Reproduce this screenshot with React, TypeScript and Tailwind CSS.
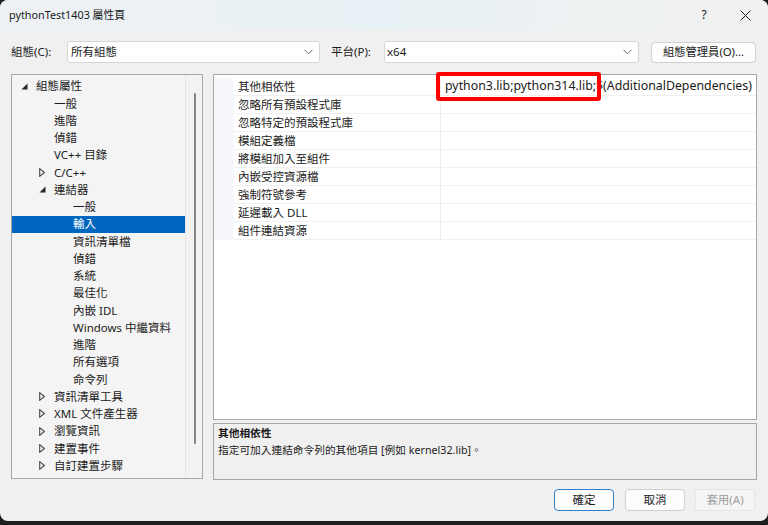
import React from "react";

type Node = { level: 0 | 1 | 2; label: string; state?: "open" | "closed"; selected?: boolean };

const tree: Node[] = [
  { level: 0, label: "組態屬性", state: "open" },
  { level: 1, label: "一般" },
  { level: 1, label: "進階" },
  { level: 1, label: "偵錯" },
  { level: 1, label: "VC++ 目錄" },
  { level: 1, label: "C/C++", state: "closed" },
  { level: 1, label: "連結器", state: "open" },
  { level: 2, label: "一般" },
  { level: 2, label: "輸入", selected: true },
  { level: 2, label: "資訊清單檔" },
  { level: 2, label: "偵錯" },
  { level: 2, label: "系統" },
  { level: 2, label: "最佳化" },
  { level: 2, label: "內嵌 IDL" },
  { level: 2, label: "Windows 中繼資料" },
  { level: 2, label: "進階" },
  { level: 2, label: "所有選項" },
  { level: 2, label: "命令列" },
  { level: 1, label: "資訊清單工具", state: "closed" },
  { level: 1, label: "XML 文件產生器", state: "closed" },
  { level: 1, label: "瀏覽資訊", state: "closed" },
  { level: 1, label: "建置事件", state: "closed" },
  { level: 1, label: "自訂建置步驟", state: "closed" },
];

const props = [
  "其他相依性",
  "忽略所有預設程式庫",
  "忽略特定的預設程式庫",
  "模組定義檔",
  "將模組加入至組件",
  "內嵌受控資源檔",
  "強制符號參考",
  "延遲載入 DLL",
  "組件連結資源",
];

function Chevron() {
  return (
    <svg width="9" height="6" viewBox="0 0 9 6" className="shrink-0">
      <polyline points="0.5,0.8 4.5,4.8 8.5,0.8" fill="none" stroke="#6b6b6b" strokeWidth="1" />
    </svg>
  );
}

function OpenTri({ selected }: { selected?: boolean }) {
  return (
    <svg width="7" height="7" viewBox="0 0 7 7">
      <polygon points="6.5,0.5 6.5,6.5 0.5,6.5" fill={selected ? "#fff" : "#262626"} />
    </svg>
  );
}

function ClosedTri() {
  return (
    <svg width="6" height="9" viewBox="0 0 6 9">
      <polygon points="0.7,0.7 5.3,4.5 0.7,8.3" fill="none" stroke="#4a4a4a" strokeWidth="1.1" />
    </svg>
  );
}

export default function App() {
  const padFor = (l: number) => (l === 0 ? "pl-[6px]" : l === 1 ? "pl-[24px]" : "pl-[43px]");
  return (
    <div className="w-[768px] h-[525px] bg-[#1e1e1e] overflow-hidden font-['Noto_Sans','Noto_Sans_CJK_TC',sans-serif] text-[#1b1b1b]">
      <div className="w-[768px] h-[521px] bg-[#f0f0f0] rounded-[8px] flex flex-col overflow-hidden">
        {/* Title bar */}
        <div className="h-[30px] flex items-center bg-linear-to-r from-[#eef1f4] via-[#e8f1f5] to-[#f1f1ef] shrink-0">
          <div className="pl-[9px] text-[10.8px] leading-none text-[#1a1a1a]">pythonTest1403 屬性頁</div>
          <div className="flex-1" />
          <div className="w-[20px] text-center text-[12px] leading-none text-[#1a1a1a] mr-[26px]">?</div>
          <svg width="11" height="11" viewBox="0 0 11 11" className="mr-[17px]">
            <path d="M0.5 0.5 L10.5 10.5 M10.5 0.5 L0.5 10.5" stroke="#1a1a1a" strokeWidth="1" />
          </svg>
        </div>

        {/* Top row */}
        <div className="mt-[11px] h-[22px] flex items-center pl-[11px] text-[11.5px] shrink-0">
          <div className="w-[56px]">組態(C):</div>
          <div className="w-[253px] h-[22px] bg-white border border-[#d6d6d6] rounded-[3px] flex items-center pl-[3px] pr-[6px]">
            <span className="flex-1">所有組態</span>
            <Chevron />
          </div>
          <div className="w-[53px] ml-[11px]">平台(P):</div>
          <div className="w-[255px] h-[22px] bg-white border border-[#d6d6d6] rounded-[3px] flex items-center pl-[2px] pr-[6px]">
            <span className="flex-1">x64</span>
            <Chevron />
          </div>
          <div className="ml-[12px] w-[105px] h-[21px] bg-[#fdfdfd] border border-[#d0d0d0] rounded-[4px] flex items-center justify-center text-[11.3px]">
            組態管理員(O)...
          </div>
        </div>

        {/* Main area */}
        <div className="mt-[11px] h-[406px] flex pl-[11px] shrink-0">
          {/* Tree */}
          <div className="w-[192px] h-[405px] border border-[#a7a7a7] bg-[#f4f4f4] flex">
            <div className="w-[173px] pt-[2.5px] text-[11.5px]">
              {tree.map((n, i) => (
                <div
                  key={i}
                  className={`h-[17.25px] flex items-center ${padFor(n.level)} ${n.selected ? "bg-[#0067c0] text-white" : ""}`}
                >
                  <div className="w-[18px] flex items-center pl-[3px]">
                    {n.state === "open" && <OpenTri selected={n.selected} />}
                    {n.state === "closed" && <ClosedTri />}
                  </div>
                  <span className="whitespace-nowrap leading-none">{n.label}</span>
                </div>
              ))}
            </div>
            <div className="flex-1 border-l border-[#e4e4e4] bg-[#f2f2f2] flex justify-center pt-[18px]">
              <div className="w-[2px] h-[351px] bg-[#858585] rounded-full ml-[1px]" />
            </div>
          </div>

          {/* Right column */}
          <div className="ml-[10px] w-[544px] flex flex-col">
            <div className="relative h-[346px] border border-[#a7a7a7] bg-white pt-[3px]">
              {props.map((p, i) => (
                <div key={i} className="h-[18px] flex">
                  <div className="w-[20px] bg-[#f6f8fb]" />
                  <div className="flex-1 flex border-b border-[#f0f0f0]">
                    <div className="w-[206px] pl-[4px] flex items-center text-[11.5px] whitespace-nowrap leading-none">{p}</div>
                    <div className="flex-1 border-l border-[#f0f0f0] pl-[4px] flex items-center text-[12.35px] whitespace-nowrap leading-none">
                      {i === 0 ? "python3.lib;python314.lib;$(AdditionalDependencies)" : ""}
                    </div>
                  </div>
                </div>
              ))}
              <div className="absolute left-[222px] top-[-3px] w-[165px] h-[29px] border-[4px] border-[#ff0000] rounded-[3px]" />
            </div>
            <div className="mt-[3px] h-[57px] border border-[#a7a7a7] bg-[#f0f0f0] px-[4px] pt-[1px] text-[10.7px]">
              <div className="h-[17px] flex items-center font-bold leading-none">其他相依性</div>
              <div className="h-[17px] flex items-center leading-none">指定可加入連結命令列的其他項目 [例如 kernel32.lib]。</div>
            </div>
          </div>
        </div>

        {/* Buttons */}
        <div className="mt-[9px] h-[22px] flex justify-end pr-[13px] text-[11.5px] shrink-0">
          <div className="w-[60px] h-[22px] bg-[#fdfdfd] border border-[#2f7fcc] rounded-[4px] flex items-center justify-center">確定</div>
          <div className="ml-[11px] w-[60px] h-[22px] bg-[#fdfdfd] border border-[#d0d0d0] rounded-[4px] flex items-center justify-center">取消</div>
          <div className="ml-[10px] w-[60px] h-[22px] bg-[#f5f5f5] border border-[#e5e5e5] rounded-[4px] flex items-center justify-center text-[#a0a0a0]">套用(A)</div>
        </div>
      </div>
    </div>
  );
}
